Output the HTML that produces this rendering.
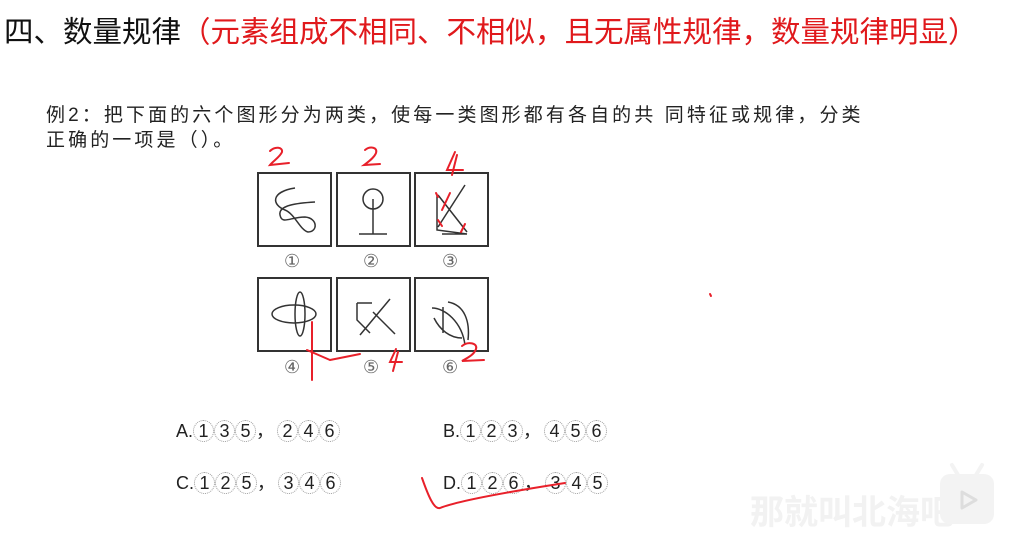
<!DOCTYPE html><html><head><meta charset="utf-8"><style>
body{margin:0;width:1022px;height:531px;background:#fff;position:relative;overflow:hidden;font-family:"Liberation Sans","Noto Sans CJK SC",sans-serif}
.t{position:absolute;white-space:nowrap}
.o{position:absolute;white-space:nowrap;font-size:18px;color:#222;line-height:20px}
.c{display:inline-block;width:19px;height:20px;border:1px dotted #999;border-radius:50%;text-align:center;font-size:18px;line-height:20px;vertical-align:middle;margin-top:-3px}
.g{display:inline-block;width:21px;text-align:left}
</style></head><body>
<div class="t" style="left:4px;top:9px;font-size:29.5px;color:#111">四、数量规律<span style="color:#e0191c">（元素组成不相同、不相似，且无属性规律，数量规律明显）</span></div>
<div class="t" style="left:46px;top:100px;font-size:19px;letter-spacing:3.1px;color:#222">例2：把下面的六个图形分为两类，使每一类图形都有各自的共 同特征或规律，分类</div>
<div class="t" style="left:46px;top:125px;font-size:19px;letter-spacing:3.1px;color:#222">正确的一项是（）。</div>
<div class="o" style="left:176px;top:421px">A.<span class="c">1</span><span class="c">3</span><span class="c">5</span><span class="g">，</span><span class="c">2</span><span class="c">4</span><span class="c">6</span></div>
<div class="o" style="left:443px;top:421px">B.<span class="c">1</span><span class="c">2</span><span class="c">3</span><span class="g">，</span><span class="c">4</span><span class="c">5</span><span class="c">6</span></div>
<div class="o" style="left:176px;top:473px">C.<span class="c">1</span><span class="c">2</span><span class="c">5</span><span class="g">，</span><span class="c">3</span><span class="c">4</span><span class="c">6</span></div>
<div class="o" style="left:443px;top:473px">D.<span class="c">1</span><span class="c">2</span><span class="c">6</span><span class="g">，</span><span class="c">3</span><span class="c">4</span><span class="c">5</span></div>
<div class="t" style="left:750px;top:485px;font-size:34px;font-weight:bold;color:#f2f2f2">那就叫北海吧</div>
<svg width="1022" height="531" style="position:absolute;left:0;top:0">
<g fill="none" stroke="#333" stroke-width="2">
<rect x="258" y="173" width="73" height="73"/><rect x="337" y="173" width="73" height="73"/><rect x="415" y="173" width="73" height="73"/>
<rect x="258" y="278" width="73" height="73"/><rect x="337" y="278" width="73" height="73"/><rect x="415" y="278" width="73" height="73"/>
<g stroke-width="1.5">
<path d="M295 188 C270 192 272 205 285 210 C295 214 300 230 308 232 C318 232 318 218 305 217 C290 217 282 225 280 215 C278 205 298 203 315 202"/>
<circle cx="373" cy="199" r="10"/><path d="M373 199V234M359 234H387"/>
<path d="M437 195V230L467 234H442M438 195L467 232M438 227L465 185"/>
<ellipse cx="294" cy="314" rx="22" ry="9"/><ellipse cx="300" cy="314" rx="5" ry="22"/>
<path d="M357 303V320L370 333M357 303H372M360 335L390 299M373 312L395 334"/>
<path d="M443 307V333M432 308C445 308 462 322 465 345M448 302C465 305 470 322 468 340M434 318C440 330 450 338 462 338"/>
</g></g>
<g font-size="18" fill="#666" font-family="Liberation Serif,serif"><text x="284" y="267">①</text><text x="363" y="267">②</text><text x="442" y="267">③</text><text x="284" y="373">④</text><text x="363" y="373">⑤</text><text x="442" y="373">⑥</text></g>
<g fill="none" stroke="#e8202a" stroke-width="2" stroke-linecap="round">
<path d="M270 151C275 146 283 147 282 152C280 157 273 161 270 165L289 163"/>
<path d="M365 150C370 146 378 147 376 153C374 158 368 162 364 165L380 164"/>
<path d="M455 152L447 170H463M457 155L452 175M450 193L442 210M436 193L438 197M438 220L442 226M465 224L461 232"/>
<path d="M312 322V380M307 350L330 360M330 360C340 358 350 356 360 354"/>
<path d="M396 349L390 362H402M398 352L393 371"/>
<path d="M462 346C468 341 478 343 476 349C474 355 467 358 462 361L484 360"/>
<path d="M422 478C428 495 434 510 440 508C460 500 520 490 565 483"/>
<path d="M710 294L711 296"/>
</g>
<g transform="translate(940,462)"><rect x="0" y="12" width="54" height="50" rx="10" fill="#f3f3f3"/><path d="M18 13L12 3M36 13L42 3" stroke="#f3f3f3" stroke-width="4" stroke-linecap="round"/><path d="M22 30L36 38L22 46Z" fill="none" stroke="#ddd" stroke-width="3" stroke-linejoin="round"/></g>
</svg>
</body></html>
